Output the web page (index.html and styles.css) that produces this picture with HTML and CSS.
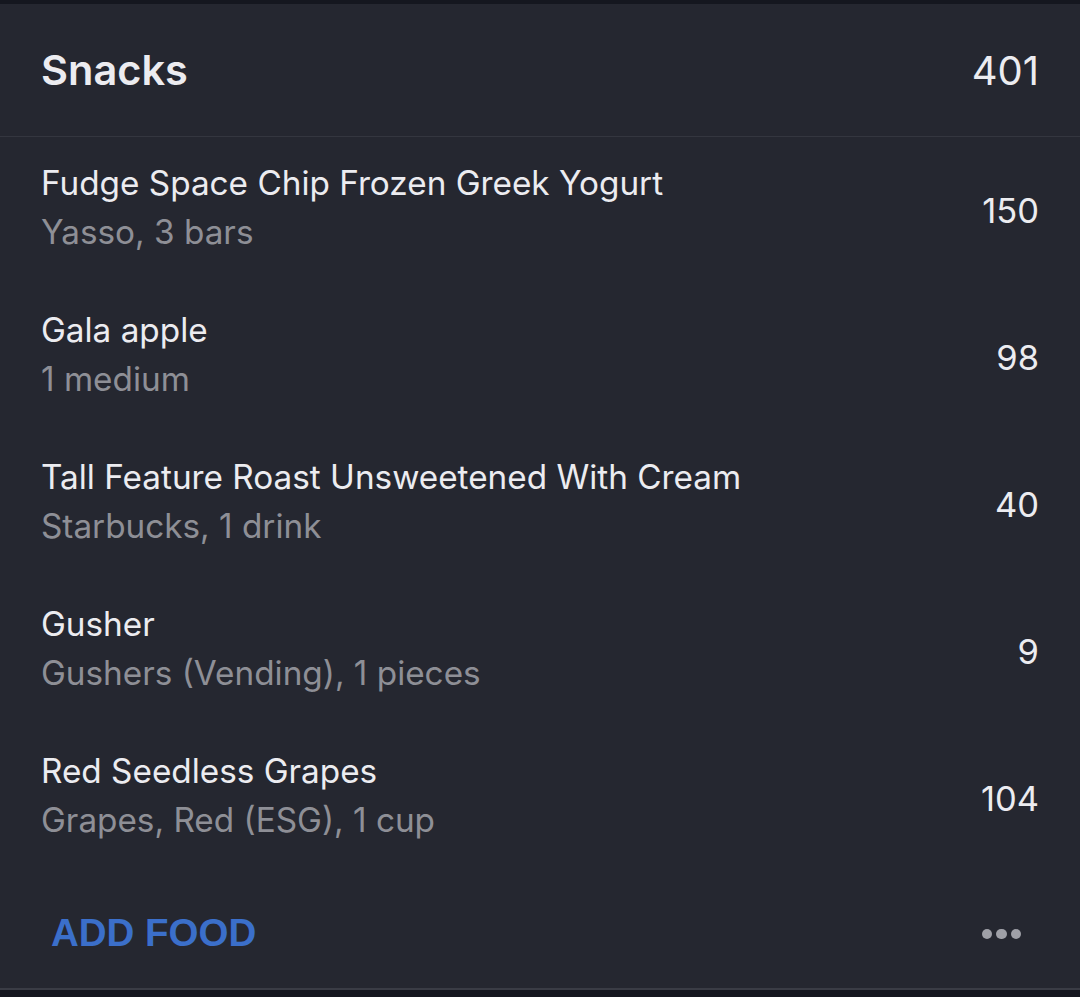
FILE: index.html
```html
<!DOCTYPE html>
<html>
<head>
<meta charset="utf-8">
<link rel="stylesheet" href="styles.css">
</head>
<body>
<div class="topstrip"></div>
<section class="card">
  <header class="head">
    <h1 class="title">Snacks</h1>
    <span class="total">401</span>
  </header>
  <ul class="list">
    <li class="row"><div class="info"><div class="name">Fudge Space Chip Frozen Greek Yogurt</div><div class="sub">Yasso, 3 bars</div></div><div class="cal">150</div></li>
    <li class="row"><div class="info"><div class="name">Gala apple</div><div class="sub">1 medium</div></div><div class="cal">98</div></li>
    <li class="row"><div class="info"><div class="name">Tall Feature Roast Unsweetened With Cream</div><div class="sub">Starbucks, 1 drink</div></div><div class="cal">40</div></li>
    <li class="row"><div class="info"><div class="name">Gusher</div><div class="sub">Gushers (Vending), 1 pieces</div></div><div class="cal">9</div></li>
    <li class="row"><div class="info"><div class="name">Red Seedless Grapes</div><div class="sub">Grapes, Red (ESG), 1 cup</div></div><div class="cal">104</div></li>
  </ul>
  <footer class="foot">
    <span class="add">ADD FOOD</span>
    <span class="more"><i></i><i></i><i></i></span>
  </footer>
</section>
<div class="bottomstrip"></div>
</body>
</html>
```
FILE: styles.css
```css
html, body {
  margin: 0;
  padding: 0;
  background: #15171f;
}
body {
  width: 1080px;
  height: 997px;
  overflow: hidden;
  font-family: "Inter", "Liberation Sans", sans-serif;
  color: #ebebef;
}
.topstrip {
  height: 4px;
  background: #15171f;
}
.card {
  background: #252730;
  height: 986px;
  display: flex;
  flex-direction: column;
}
.head {
  height: 132px;
  border-bottom: 1px solid #34363f;
  display: flex;
  align-items: center;
  justify-content: space-between;
  padding: 0 41px;
}
.title {
  margin: 0;
  font-size: 41.5px;
  font-weight: 600;
  color: #ececf0;
}
.total {
  font-size: 40px;
  color: #ececf0;
}
.list {
  list-style: none;
  margin: 0;
  padding: 0;
}
.row {
  height: 147px;
  box-sizing: border-box;
  padding: 22px 41px 27px 41px;
  display: flex;
  align-items: center;
  justify-content: space-between;
}
.name {
  font-size: 33.3px;
  line-height: 49px;
  color: #ececf0;
}
.sub {
  font-size: 33.3px;
  line-height: 49px;
  color: #8e8f96;
}
.cal {
  font-size: 34.5px;
  color: #ececf0;
  margin-top: 5px;
}
.foot {
  flex: 1;
  border-bottom: 2px solid #3a3c45;
  display: flex;
  align-items: center;
  justify-content: space-between;
  padding: 0 59px 0 51px;
}
.add {
  font-family: "Liberation Sans", sans-serif;
  font-weight: 700;
  font-size: 38.5px;
  color: #3b6fca;
  margin-top: 5px;
}
.more {
  display: flex;
  gap: 4px;
  margin-top: 8px;
}
.more i {
  width: 10.5px;
  height: 10.5px;
  border-radius: 50%;
  background: #9fa0a7;
}
.bottomstrip {
  height: 7px;
  background: #15171f;
}
```
